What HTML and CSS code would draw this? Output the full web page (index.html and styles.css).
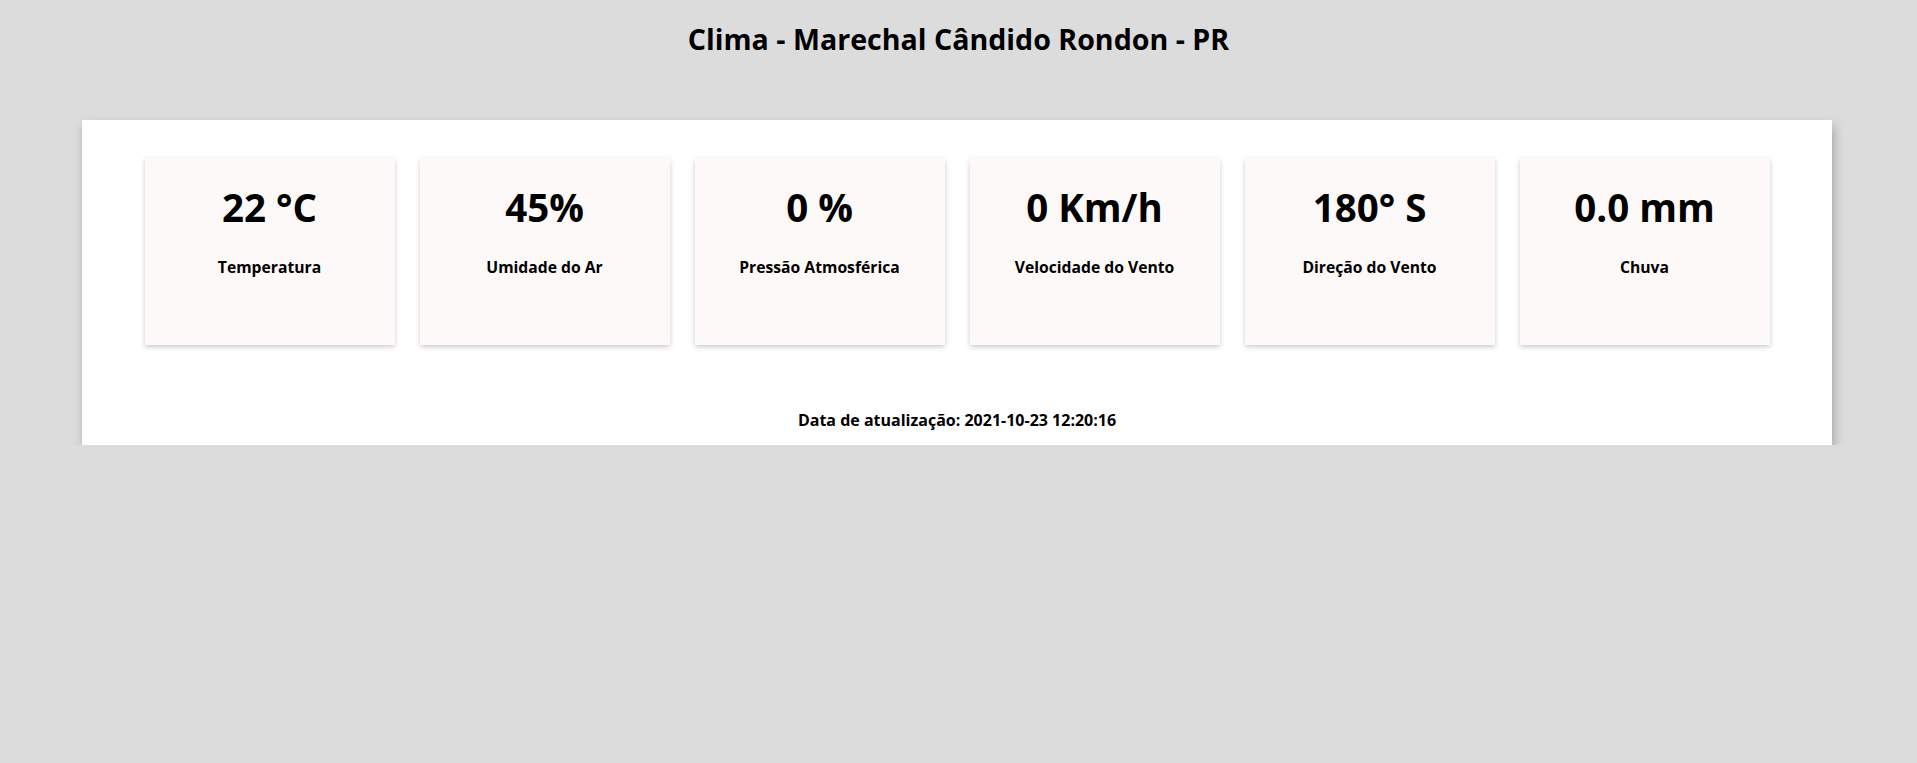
FILE: index.html
```html
<!DOCTYPE html>
<html lang="pt-BR">
<head>
<meta charset="utf-8">
<title>Clima - Marechal Cândido Rondon - PR</title>
<link rel="stylesheet" href="styles.css">
</head>
<body>
<h1 class="title">Clima - Marechal Cândido Rondon - PR</h1>
<main class="panel">
  <div class="cards">
    <div class="card"><div class="value">22 °C</div><div class="label">Temperatura</div></div>
    <div class="card"><div class="value">45%</div><div class="label">Umidade do Ar</div></div>
    <div class="card"><div class="value">0 %</div><div class="label">Pressão Atmosférica</div></div>
    <div class="card"><div class="value">0 Km/h</div><div class="label">Velocidade do Vento</div></div>
    <div class="card"><div class="value">180° S</div><div class="label">Direção do Vento</div></div>
    <div class="card"><div class="value">0.0 mm</div><div class="label">Chuva</div></div>
  </div>
  <p class="updated">Data de atualização: 2021-10-23 12:20:16</p>
</main>
</body>
</html>
```
FILE: styles.css
```css
html, body {
  margin: 0;
  padding: 0;
}
body {
  background: #dcdcdc;
  font-family: "Open Sans", "Noto Sans", sans-serif;
  color: #000;
}
.title {
  margin: 0 0 64px;
  padding-top: 22px;
  font-size: 28.6px;
  line-height: 34px;
  font-weight: 700;
  text-align: center;
}
.panel {
  width: 1750px;
  margin-left: 82px;
  box-sizing: border-box;
  background: #fff;
  padding: 38px 0 15px;
  box-shadow: 2px 6px 10px rgba(0, 0, 0, 0.25);
}
.cards {
  display: flex;
  justify-content: center;
  gap: 25px;
}
.card {
  width: 250px;
  height: 187px;
  box-sizing: border-box;
  padding-top: 25px;
  background: #fcf9f8;
  box-shadow: 0 2px 5px rgba(0, 0, 0, 0.2);
  text-align: center;
}
.value {
  font-size: 38.5px;
  line-height: 48px;
  font-weight: 700;
}
.label {
  margin-top: 26px;
  font-size: 15.7px;
  line-height: 20px;
  font-weight: 700;
}
.updated {
  margin: 65px 0 0;
  font-size: 16px;
  line-height: 20px;
  font-weight: 700;
  text-align: center;
}
```
